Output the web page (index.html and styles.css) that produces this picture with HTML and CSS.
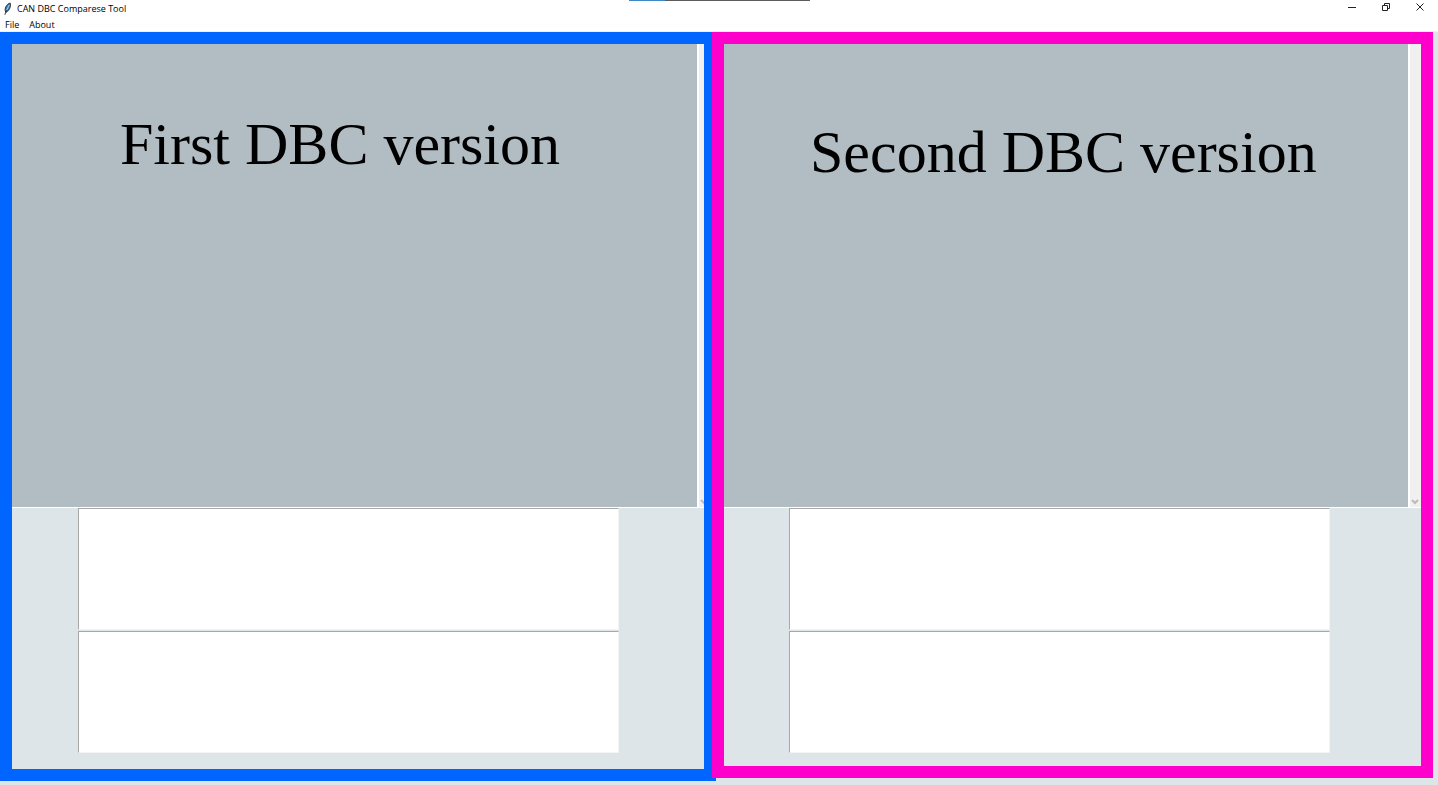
FILE: index.html
```
<!DOCTYPE html>
<html lang="en">
<head>
  <meta charset="UTF-8" />
  <meta name="viewport" content="width=device-width, initial-scale=1" />
  <title>CAN DBC Comparese Tool</title>
  <link rel="stylesheet" href="styles.css">
</head>
<body>

  <div class="screen-tab"></div>

  <header class="title-bar">
    <svg class="app-icon" viewBox="0 0 10 14" aria-hidden="true">
      <path d="M3 11 C1 7 4 2 8 1 C9 4 8 8 4 11 Z" fill="#3d7fb5" stroke="#1c2c3c" stroke-width="1" />
      <path d="M4 9 L7 3" stroke="#b4d0e4" stroke-width="1" fill="none" />
      <path d="M2 14 L4 9" stroke="#222" stroke-width="1" fill="none" />
    </svg>
    <span class="title">CAN DBC Comparese Tool</span>
    <div class="window-buttons">
      <button aria-label="Minimize">
        <svg viewBox="0 0 10 10"><path d="M1 5.5h8" /></svg>
      </button>
      <button aria-label="Restore">
        <svg viewBox="0 0 10 10"><path d="M1.5 3.5h5v5h-5zM3.5 3.5v-2h5v5h-2" /></svg>
      </button>
      <button aria-label="Close">
        <svg viewBox="0 0 10 10"><path d="M1.5 1.5l7 7M8.5 1.5l-7 7" /></svg>
      </button>
    </div>
  </header>

  <nav class="menu-bar">
    <button>File</button>
    <button>About</button>
  </nav>

  <main class="workspace">
    <section class="pane first">
      <div class="viewer">
        <div class="canvas"><h1>First DBC version</h1></div>
        <div class="scroll">
          <svg viewBox="0 0 8 6"><path d="M1 1l3 3l3-3" /></svg>
        </div>
      </div>
      <div class="details">
        <textarea aria-label="First version messages"></textarea>
        <textarea aria-label="First version signals"></textarea>
      </div>
    </section>

    <section class="pane second">
      <div class="viewer">
        <div class="canvas"><h1>Second DBC version</h1></div>
        <div class="scroll">
          <svg viewBox="0 0 8 6"><path d="M1 1l3 3l3-3" /></svg>
        </div>
      </div>
      <div class="details">
        <textarea aria-label="Second version messages"></textarea>
        <textarea aria-label="Second version signals"></textarea>
      </div>
    </section>
  </main>

</body>
</html>
```

FILE: styles.css
```
* {
  box-sizing: border-box;
}
body {
  margin: 0;
  min-height: 100vh;
  display: flex;
  flex-direction: column;
  background-color: #dde5e8;
  color: #000;
  font-family: "Open Sans", "Noto Sans", sans-serif;
  font-size: 9px;
}
button {
  border: none;
  padding: 0;
  background: none;
  color: inherit;
  font: inherit;
}

/* edge of the bar docked at the top of the screen */
.screen-tab {
  position: absolute;
  top: 0;
  left: 0;
  right: 0;
  width: 181px;
  height: 1px;
  margin: 0 auto;
  background: linear-gradient(to right, #3d88c6 20%, #5c5c5c 20%);
}

.title-bar {
  display: flex;
  align-items: center;
  height: 17px;
  padding-left: 3px;
  background-color: #fff;
}
.app-icon {
  width: 9px;
  height: 13px;
  margin-right: 5px;
}
.window-buttons {
  display: flex;
  align-self: flex-start;
  margin-left: auto;
  padding-right: 1px;
}
.window-buttons button {
  display: flex;
  align-items: center;
  justify-content: center;
  width: 34px;
  height: 14px;
}
.window-buttons svg {
  width: 10px;
  height: 10px;
  fill: none;
  stroke: #222;
  stroke-width: 1;
}
.menu-bar {
  display: flex;
  gap: 10px;
  height: 15px;
  padding-left: 5px;
  background-color: #fff;
  border-bottom: 1px solid #f0f0f0;
}

.workspace {
  flex: 1;
  display: grid;
  grid-template-columns: 712fr 721fr;
  padding-right: 5px;
}
.pane {
  display: flex;
  flex-direction: column;
  border: 12px solid;
}
.first {
  margin-right: -4px;
  margin-bottom: 4px;
  border-color: #06f;
}
.second {
  margin-bottom: 7px;
  border-color: #f0c;
}
.viewer {
  flex: 1;
  display: flex;
  border-bottom: 1px solid #fff;
}
.canvas {
  flex: 1;
  background-color: #b2bdc3;
}
.canvas h1 {
  margin: 0;
  font-family: "Liberation Serif", serif;
  font-size: 60px;
  font-weight: normal;
  line-height: 60px;
  white-space: nowrap;
}
.first h1 {
  padding: 70px 0 0 108px;
}
.second h1 {
  padding: 78px 0 0 86px;
}
.scroll {
  display: flex;
  align-items: flex-end;
  width: 13px;
  padding: 0 0 2px 1px;
  overflow: hidden;
  background-color: #f0f0f0;
  border-left: 2px solid #fff;
}
.first .scroll {
  width: 7px;
}
.scroll svg {
  flex-shrink: 0;
  width: 8px;
  height: 6px;
  fill: none;
  stroke: #bbb;
  stroke-width: 2;
}

.details {
  display: flex;
  flex-direction: column;
  gap: 1px;
}
.first .details {
  padding-right: 85px;
  padding-left: 66px;
  padding-bottom: 16px;
}
.second .details {
  padding-right: 91px;
  padding-left: 65px;
  padding-bottom: 13px;
}
textarea {
  display: block;
  width: 100%;
  height: 122px;
  resize: none;
  background-color: #fff;
  border: 1px solid #f4f4f4;
  border-top-color: #a8a8a8;
  border-left-color: #a8a8a8;
  outline: none;
}
```
